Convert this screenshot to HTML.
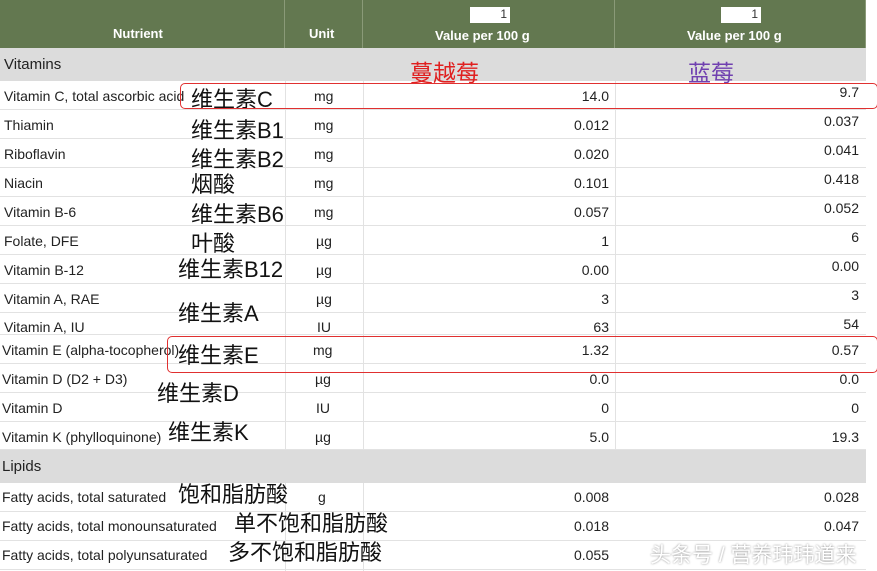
<!DOCTYPE html>
<html><head><meta charset="utf-8"><style>
body{margin:0;width:877px;height:571px;position:relative;overflow:hidden;background:#fff;font-family:"Liberation Sans","Noto Sans CJK SC",sans-serif;}
.a{position:absolute;white-space:nowrap}
.hd{position:absolute;top:0;height:48px;background:#637850;color:#fff;font-weight:bold;font-size:13px;text-align:center;border-right:1px solid #8a9a78;box-sizing:border-box}
.box{position:absolute;top:7px;width:40px;height:16px;background:#fff;color:#333;font-weight:normal;font-size:12px;text-align:right;padding-right:3px;box-sizing:border-box}
.row{position:absolute;left:0;width:866px;height:29px;border-bottom:1px solid #e2e2e2;box-sizing:border-box}
.t{font-size:14px;color:#222}
.cn{font-size:22px;color:#111}
.vl{position:absolute;top:0;height:571px;width:1px;background:#e2e2e2}
.band{position:absolute;left:0;width:866px;background:#dcdcdc;font-size:15px;color:#222}
</style></head><body>
<div class="hd" style="left:0;width:285px"><div class="a" style="left:113px;top:26px">Nutrient</div></div>
<div class="hd" style="left:285px;width:78px"><div class="a" style="left:24px;top:26px">Unit</div></div>
<div class="hd" style="left:363px;width:252px"><div class="box" style="left:107px">1</div><div class="a" style="left:72px;top:28px">Value per 100 g</div></div>
<div class="hd" style="left:615px;width:251px"><div class="box" style="left:106px">1</div><div class="a" style="left:72px;top:28px">Value per 100 g</div></div>
<div class="band" style="top:48px;height:33px"><div class="a" style="left:4px;top:8px">Vitamins</div></div>
<div class="band" style="top:450px;height:33px"><div class="a" style="left:2px;top:8px">Lipids</div></div>
<div class="a" style="left:410px;top:54px;font-size:23px;color:#e02020">蔓越莓</div>
<div class="a" style="left:688px;top:54px;font-size:23px;color:#7040b0">蓝莓</div>

<div class="vl" style="left:285px;top:81px;height:369px"></div>
<div class="vl" style="left:363px;top:81px;height:369px"></div>
<div class="vl" style="left:615px;top:81px;height:369px"></div>
<div class="vl" style="left:285px;top:483px;height:88px"></div>
<div class="vl" style="left:363px;top:483px;height:88px"></div>

<div class="row" style="top:81px"></div><div class="row" style="top:110px"></div><div class="row" style="top:139px"></div><div class="row" style="top:168px"></div><div class="row" style="top:197px"></div><div class="row" style="top:226px"></div><div class="row" style="top:255px"></div><div class="row" style="top:284px"></div><div class="row" style="top:306px;height:29px"></div>
<div class="row" style="top:335px"></div><div class="row" style="top:364px"></div><div class="row" style="top:393px"></div><div class="row" style="top:421px"></div>
<div class="row" style="top:483px"></div><div class="row" style="top:512px"></div><div class="row" style="top:541px"></div>

<div class="a t" style="left:4px;top:88px">Vitamin C, total ascorbic acid</div>
<div class="a t" style="left:4px;top:117px">Thiamin</div>
<div class="a t" style="left:4px;top:146px">Riboflavin</div>
<div class="a t" style="left:4px;top:175px">Niacin</div>
<div class="a t" style="left:4px;top:204px">Vitamin B-6</div>
<div class="a t" style="left:4px;top:233px">Folate, DFE</div>
<div class="a t" style="left:4px;top:262px">Vitamin B-12</div>
<div class="a t" style="left:4px;top:291px">Vitamin A, RAE</div>
<div class="a t" style="left:4px;top:319px">Vitamin A, IU</div>
<div class="a t" style="left:2px;top:342px">Vitamin E (alpha-tocopherol)</div>
<div class="a t" style="left:2px;top:371px">Vitamin D (D2 + D3)</div>
<div class="a t" style="left:2px;top:400px">Vitamin D</div>
<div class="a t" style="left:2px;top:429px">Vitamin K (phylloquinone)</div>
<div class="a t" style="left:2px;top:489px">Fatty acids, total saturated</div>
<div class="a t" style="left:2px;top:518px">Fatty acids, total monounsaturated</div>
<div class="a t" style="left:2px;top:547px">Fatty acids, total polyunsaturated</div>

<div class="a t" style="left:314px;top:88px">mg</div>
<div class="a t" style="left:314px;top:117px">mg</div>
<div class="a t" style="left:314px;top:146px">mg</div>
<div class="a t" style="left:314px;top:175px">mg</div>
<div class="a t" style="left:314px;top:204px">mg</div>
<div class="a t" style="left:316px;top:233px">µg</div>
<div class="a t" style="left:316px;top:262px">µg</div>
<div class="a t" style="left:316px;top:291px">µg</div>
<div class="a t" style="left:317px;top:319px">IU</div>
<div class="a t" style="left:313px;top:342px">mg</div>
<div class="a t" style="left:315px;top:371px">µg</div>
<div class="a t" style="left:316px;top:400px">IU</div>
<div class="a t" style="left:315px;top:429px">µg</div>
<div class="a t" style="left:318px;top:489px">g</div>

<div style="position:absolute;left:363px;top:0;width:246px;text-align:right" class="t">
<div class="a" style="right:0;top:88px">14.0</div><div class="a" style="right:0;top:117px">0.012</div><div class="a" style="right:0;top:146px">0.020</div><div class="a" style="right:0;top:175px">0.101</div><div class="a" style="right:0;top:204px">0.057</div><div class="a" style="right:0;top:233px">1</div><div class="a" style="right:0;top:262px">0.00</div><div class="a" style="right:0;top:291px">3</div><div class="a" style="right:0;top:319px">63</div><div class="a" style="right:0;top:342px">1.32</div><div class="a" style="right:0;top:371px">0.0</div><div class="a" style="right:0;top:400px">0</div><div class="a" style="right:0;top:429px">5.0</div><div class="a" style="right:0;top:489px">0.008</div><div class="a" style="right:0;top:518px">0.018</div><div class="a" style="right:0;top:547px">0.055</div>
</div>
<div style="position:absolute;left:615px;top:0;width:244px" class="t">
<div class="a" style="right:0;top:84px">9.7</div><div class="a" style="right:0;top:113px">0.037</div><div class="a" style="right:0;top:142px">0.041</div><div class="a" style="right:0;top:171px">0.418</div><div class="a" style="right:0;top:200px">0.052</div><div class="a" style="right:0;top:229px">6</div><div class="a" style="right:0;top:258px">0.00</div><div class="a" style="right:0;top:287px">3</div><div class="a" style="right:0;top:316px">54</div><div class="a" style="right:0;top:342px">0.57</div><div class="a" style="right:0;top:371px">0.0</div><div class="a" style="right:0;top:400px">0</div><div class="a" style="right:0;top:429px">19.3</div><div class="a" style="right:0;top:489px">0.028</div><div class="a" style="right:0;top:518px">0.047</div>
</div>

<div class="a cn" style="left:191px;top:82px">维生素C</div>
<div class="a cn" style="left:191px;top:113px">维生素B1</div>
<div class="a cn" style="left:191px;top:142px">维生素B2</div>
<div class="a cn" style="left:191px;top:167px">烟酸</div>
<div class="a cn" style="left:191px;top:197px">维生素B6</div>
<div class="a cn" style="left:191px;top:226px">叶酸</div>
<div class="a cn" style="left:178px;top:252px">维生素B12</div>
<div class="a cn" style="left:178px;top:296px">维生素A</div>
<div class="a cn" style="left:178px;top:338px">维生素E</div>
<div class="a cn" style="left:157px;top:376px">维生素D</div>
<div class="a cn" style="left:168px;top:415px">维生素K</div>
<div class="a cn" style="left:178px;top:477px">饱和脂肪酸</div>
<div class="a cn" style="left:234px;top:506px">单不饱和脂肪酸</div>
<div class="a cn" style="left:228px;top:535px">多不饱和脂肪酸</div>

<div class="a" style="left:180px;top:83px;width:696px;height:24px;border:1.5px solid #e03030;border-radius:5px"></div>
<div class="a" style="left:167px;top:336px;width:709px;height:35px;border:1.5px solid #e03030;border-radius:5px"></div>
<div class="a" style="left:650px;top:539px;font-size:21px;color:#fff;text-shadow:0 0 2px #888">头条号 / 营养玮玮道来</div>
</body></html>
